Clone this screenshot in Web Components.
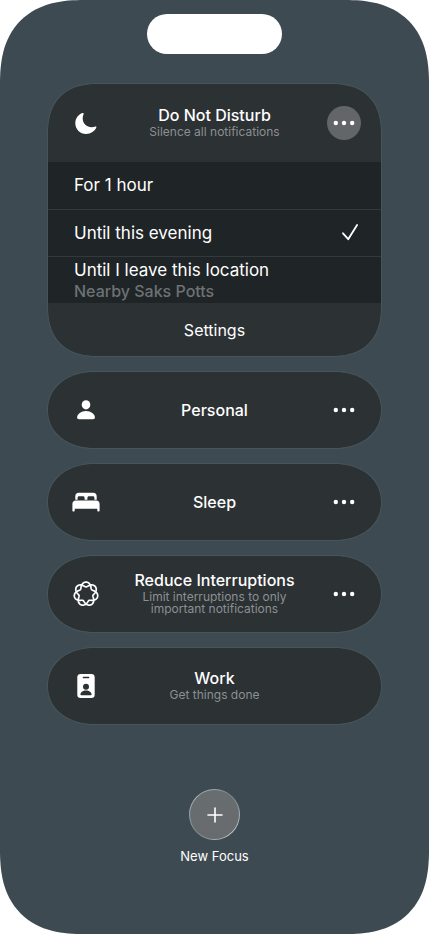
<!DOCTYPE html>
<html lang="en">
<head>
<meta charset="utf-8">
<meta name="viewport" content="width=device-width, initial-scale=1">
<title>Focus</title>
<style>
  body { margin: 0; background: #fff; font-family: Inter, "Liberation Sans", sans-serif; color: #fff; }
</style>
</head>
<body>
<focus-screen>
  <focus-card name="Do Not Disturb" detail="Silence all notifications" more open>
    <focus-icon slot="icon" name="moon"></focus-icon>
    <focus-menu slot="menu">
      <focus-option name="For 1 hour"></focus-option>
      <focus-option name="Until this evening" checked></focus-option>
      <focus-option name="Until I leave this location" detail="Nearby Saks Potts"></focus-option>
    </focus-menu>
  </focus-card>
  <focus-card name="Personal" more><focus-icon slot="icon" name="person"></focus-icon></focus-card>
  <focus-card name="Sleep" more><focus-icon slot="icon" name="bed"></focus-icon></focus-card>
  <focus-card name="Reduce Interruptions" detail="Limit interruptions to only important notifications" more><focus-icon slot="icon" name="rings"></focus-icon></focus-card>
  <focus-card name="Work" detail="Get things done"><focus-icon slot="icon" name="badge"></focus-icon></focus-card>
  <new-focus slot="footer">New Focus</new-focus>
</focus-screen>

<script>
const reset = `
  :host { display: block; box-sizing: border-box; }
  *, *::before { box-sizing: border-box; }
  button { appearance: none; margin: 0; padding: 0; border: 0; background: none; font: inherit; color: inherit; cursor: pointer; }
`;

class Base extends HTMLElement {
  connectedCallback() {
    if (this.shadowRoot) return;
    this.attachShadow({ mode: "open" }).innerHTML = `<style>${reset}${this.css()}</style>${this.html()}`;
  }
}

const ringPath = (() => {
  // Closed curve that winds twice round the centre and makes seven outer lobes.
  let d = "";
  for (let i = 0; i <= 280; i++) {
    const t = i / 280 * Math.PI * 4;
    const r = 9.5 + 2.4 * Math.cos(3.5 * t);
    const a = t + 0.05 * Math.sin(3.5 * t);
    d += (i ? "L" : "M") + (14 + r * Math.sin(a)).toFixed(2) + " " + (14 - r * Math.cos(a)).toFixed(2);
  }
  return d + "Z";
})();

const icons = {
  moon: `<path fill="currentColor" d="M10.5 4C6.500 5.200 3.300 9.300 3.300 14.300C3.300 20.400 8.200 25 14.100 25C18.900 25 22.900 22.200 24.400 18.300C24.600 17.600 24 17.300 23.400 17.500C22.200 18 21 18.200 19.700 18.200C14.800 18.200 10.700 14.500 10.700 9.500C10.700 7.800 11 6.300 11.600 4.900C11.900 4.100 11.300 3.700 10.500 4Z"/>`,
  person: `<g fill="currentColor"><ellipse cx="14" cy="8.800" rx="4.300" ry="4.600"/><path d="M14 15.100C9 15.100 5.100 18.200 5.100 21.500C5.100 22.700 5.800 23.200 7 23.200H21C22.200 23.200 22.900 22.700 22.900 21.500C22.900 18.200 19 15.100 14 15.100Z"/></g>`,
  bed: `<path fill="currentColor" d="M3.300 11.700V8.200C3.300 6.100 4.600 4.800 6.700 4.800H21.300C23.400 4.800 24.700 6.100 24.700 8.200V11.700H22.400V9.700C22.400 8.800 21.900 8.200 21 8.200H17C16.100 8.200 15.400 8.800 15.400 9.700V11.700H12.600V9.700C12.600 8.800 11.900 8.200 11 8.200H7C6.100 8.200 5.600 8.800 5.600 9.700V11.700ZM3.800 12.600H24.200C26.300 12.600 27.600 14 27.600 16V22.600C27.600 23.200 27.200 23.600 26.500 23.600C25.800 23.600 25.300 23.200 25.300 22.600V20.800H2.700V22.600C2.700 23.200 2.200 23.600 1.500 23.600C.8 23.600 .4 23.200 .4 22.600V16C.4 14 1.700 12.600 3.800 12.600Z"/>`,
  rings: `<path fill="none" stroke="currentColor" stroke-width="1.700" stroke-linejoin="round" d="${ringPath}"/>`,
  badge: `<path fill="currentColor" d="M8.700 2H19.300C21.500 2 22.700 3.200 22.700 5.300V22.700C22.700 24.800 21.500 26 19.300 26H8.700C6.500 26 5.300 24.800 5.300 22.700V5.300C5.300 3.200 6.500 2 8.700 2Z"/><g fill="#2c3134"><rect x="10.600" y="4.700" width="6.800" height="1.500" rx=".75"/><circle cx="14" cy="14.800" r="3"/><path d="M8.400 22.500C8.400 20.300 10.800 18.500 14 18.500S19.600 20.300 19.600 22.500C19.600 23 19.300 23.300 18.700 23.300H9.300C8.700 23.300 8.400 23 8.400 22.500Z"/></g>`,
  dots: `<g fill="currentColor"><circle cx="5.800" cy="14" r="2.200"/><circle cx="14" cy="14" r="2.200"/><circle cx="22.200" cy="14" r="2.200"/></g>`,
  check: `<path fill="none" stroke="currentColor" stroke-width="1.800" stroke-linecap="round" stroke-linejoin="round" d="M7 14.300L12.200 20.200L21.100 6"/>`,
  plus: `<path fill="none" stroke="currentColor" stroke-width="1.600" stroke-linecap="round" d="M14 7V21M7 14H21"/>`
};

customElements.define("focus-icon", class extends Base {
  css() { return `:host { width: 28px; height: 28px; } svg { display: block; width: 100%; height: 100%; }`; }
  html() { return `<svg viewBox="0 0 28 28" aria-hidden="true">${icons[this.getAttribute("name")]}</svg>`; }
});

customElements.define("focus-option", class extends Base {
  css() { return `
    :host { height: 47px; }
    button { display: grid; grid-template-columns: 1fr 28px; align-items: center; width: 100%; height: 100%; padding: 0 17px 0 26px; text-align: left; font-size: 17px; line-height: 21px; }
    small { display: block; font-size: 16px; font-weight: 500; line-height: 20px; color: #6d7274; }
    focus-icon { justify-self: center; }
  `; }
  html() {
    const detail = this.getAttribute("detail"), on = this.hasAttribute("checked");
    return `<button type="button" role="menuitemradio" aria-checked="${on}"><span>${this.getAttribute("name")}${detail ? `<small>${detail}</small>` : ""}</span>${on ? `<focus-icon name="check"></focus-icon>` : ""}</button>`;
  }
});

customElements.define("focus-menu", class extends Base {
  css() { return `
    .options { background: #1f2527; }
    ::slotted(:not(:first-child)) { border-top: 1px solid #33393c; }
    .settings { display: block; width: 100%; height: 53px; font-size: 16px; line-height: 20px; }
  `; }
  html() { return `<div class="options" role="menu"><slot></slot></div><button class="settings" type="button">Settings</button>`; }
});

customElements.define("focus-card", class extends Base {
  css() { return `
    :host { background: #2c3134; border: 1px solid #46555b; border-radius: 42px / 39px; overflow: hidden; }
    :host([open]) { border-radius: 42px; }
    @supports (corner-shape: superellipse(1.3)) {
      :host { border-radius: 48px / 39px; corner-shape: superellipse(1.1); }
      :host([open]) { border-radius: 52px; corner-shape: superellipse(1.3); }
    }
    .row { display: grid; grid-template-columns: 1fr 75px; align-items: center; min-height: 76px; }
    :host([open]) .row { min-height: 78px; }
    .main { display: grid; grid-template-columns: 75px 1fr; align-items: center; align-self: stretch; text-align: center; }
    ::slotted(focus-icon) { justify-self: center; }
    .name { display: block; font-size: 16px; font-weight: 500; line-height: 21px; }
    .detail { display: block; padding-bottom: 3px; font-size: 12px; line-height: 12px; color: #8b9092; }
    .more { display: grid; place-items: center; justify-self: center; width: 34px; height: 34px; border-radius: 50%; }
    :host([open]) .more { background: #626668; }
  `; }
  html() {
    const name = this.getAttribute("name"), detail = this.getAttribute("detail");
    return `<div class="row">
      <button class="main" type="button"><slot name="icon"></slot><span><span class="name">${name}</span>${detail ? `<span class="detail">${detail}</span>` : ""}</span></button>
      ${this.hasAttribute("more") ? `<button class="more" type="button" aria-label="More options for ${name}" aria-expanded="${this.hasAttribute("open")}"><focus-icon name="dots"></focus-icon></button>` : ""}
    </div><slot name="menu"></slot>`;
  }
});

customElements.define("new-focus", class extends Base {
  css() { return `
    label { display: flex; flex-direction: column; align-items: center; gap: 8px; font-size: 13px; line-height: 16px; cursor: pointer; }
    button { display: grid; place-items: center; width: 51px; height: 51px; border-radius: 50%; border: 1px solid transparent; background: linear-gradient(#686d70, #676b6d) padding-box, linear-gradient(135deg, #b4c4cc, #93a0a6 30%, #7b868b 50%, #b4c0c4 85%) border-box; }
  `; }
  html() { return `<label><button type="button"><focus-icon name="plus"></focus-icon></button><slot></slot></label>`; }
});

customElements.define("focus-screen", class extends Base {
  css() { return `
    :host { display: flex; flex-direction: column; min-height: 100vh; padding: 14px 47px 70px; background: #3e4a51; border-radius: 68px; }
    @supports (corner-shape: superellipse(1.3)) {
      :host { border-radius: 84px; corner-shape: superellipse(1.3); }
    }
    .island { align-self: center; width: 135px; height: 40px; margin-bottom: 29px; border-radius: 20px; background: #fff; }
    main { display: flex; flex-direction: column; gap: 14px; }
    footer { margin-top: auto; }
  `; }
  html() { return `<div class="island"></div><main><slot></slot></main><footer><slot name="footer"></slot></footer>`; }
});
</script>
</body>
</html>
